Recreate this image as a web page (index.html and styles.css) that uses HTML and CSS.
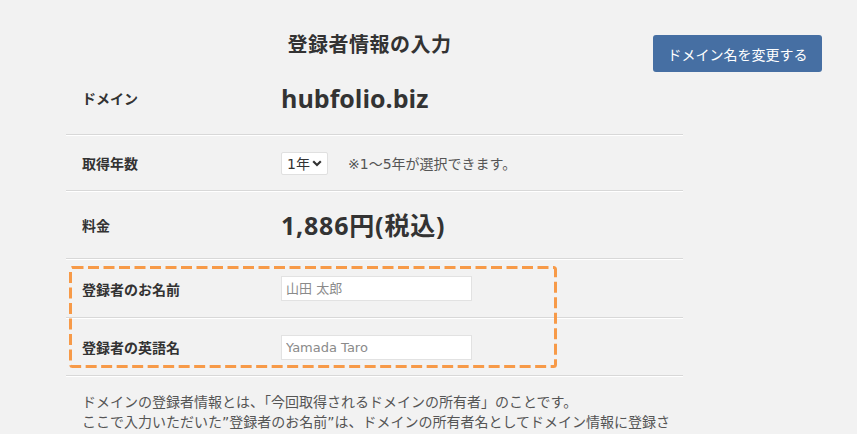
FILE: index.html
```html
<!DOCTYPE html>
<html lang="ja">
<head>
<meta charset="utf-8">
<title>登録者情報の入力</title>
<link rel="stylesheet" href="styles.css">
</head>
<body>
<div class="page">
  <header class="head">
    <h1 class="title">登録者情報の入力</h1>
    <button class="change-btn" type="button">ドメイン名を変更する</button>
  </header>
  <div class="form">
    <div class="row row-domain">
      <div class="label">ドメイン</div>
      <div class="value big">hubfolio.biz</div>
    </div>
    <div class="row row-years">
      <div class="label">取得年数</div>
      <div class="value">
        <div class="select">1年<svg class="chev" width="10" height="7" viewBox="0 0 10 7"><path d="M1.2 1.3 L5 5 L8.8 1.3" fill="none" stroke="#333" stroke-width="2.2"/></svg></div>
        <span class="note">※1〜5年が選択できます。</span>
      </div>
    </div>
    <div class="row row-price">
      <div class="label">料金</div>
      <div class="value big price">1,886円(税込)</div>
    </div>
    <div class="highlight">
      <div class="row row-name">
        <div class="label">登録者のお名前</div>
        <div class="value"><input class="field" type="text" placeholder="山田 太郎"></div>
      </div>
      <div class="row row-en">
        <div class="label">登録者の英語名</div>
        <div class="value"><input class="field" type="text" placeholder="Yamada Taro"></div>
      </div>
      <svg class="dash-frame" width="488" height="102" viewBox="0 0 488 102"><rect x="1.5" y="1.5" width="485" height="99" rx="2" fill="none" stroke="#f79a48" stroke-width="3" stroke-dasharray="11 4.5"/></svg>
    </div>
  </div>
  <p class="desc">ドメインの登録者情報とは、「今回取得されるドメインの所有者」のことです。<br>ここで入力いただいた”登録者のお名前”は、ドメインの所有者名としてドメイン情報に登録さ</p>
</div>
</body>
</html>
```
FILE: styles.css
```css
html, body {
  margin: 0;
  padding: 0;
  overflow: hidden;
}
body {
  background: #f2f2f2;
  color: #333;
  font-family: "DejaVu Sans", "Noto Sans CJK JP", sans-serif;
  font-size: 14px;
}
.page {
  margin-left: 66px;
  width: 756px;
}
.head {
  display: flex;
  align-items: flex-start;
  height: 72px;
}
.title {
  box-sizing: border-box;
  width: 587px;
  margin: 0;
  padding: 30px 0 0 20px;
  text-align: center;
  font-family: "Noto Sans CJK JP", sans-serif;
  font-size: 20px;
  letter-spacing: 0.5px;
  line-height: 28px;
  font-weight: 700;
  color: #333;
}
.change-btn {
  margin-top: 35px;
  width: 169px;
  height: 37px;
  border: none;
  border-radius: 3px;
  background: #466fa3;
  color: #fff;
  font-family: "Noto Sans CJK JP", sans-serif;
  font-size: 14px;
  padding: 0;
  cursor: pointer;
}
.form {
  width: 617px;
}
.row {
  display: flex;
  align-items: center;
  border-bottom: 1px solid #d8d8d8;
  box-shadow: 0 1px 0 #fff;
  margin-bottom: 1px;
}
.row-domain { height: 62px; padding-bottom: 10px; box-sizing: content-box; height: 52px; }
.row-years { height: 54px; }
.row-price { height: 66px; }
.row-name { height: 57px; }
.row-en { height: 56px; }
.label {
  box-sizing: border-box;
  width: 215px;
  padding-left: 16px;
  font-family: "Noto Sans CJK JP", sans-serif;
  font-weight: 700;
  font-size: 14px;
  color: #333;
}
.value {
  display: flex;
  align-items: center;
}
.big {
  font-family: "Open Sans", "Noto Sans CJK JP", sans-serif;
  font-weight: 700;
  font-size: 25px;
  color: #333;
  line-height: 32px;
}
.price {
  letter-spacing: 0.8px;
}
.select {
  box-sizing: border-box;
  width: 47px;
  height: 23px;
  display: flex;
  align-items: center;
  padding-left: 5px;
  background: #fff;
  border: 1px solid #e0e0e0;
  border-radius: 2px;
  font-size: 14px;
  color: #333;
}
.chev {
  margin-left: 2px;
}
.note {
  margin-left: 20px;
  font-size: 14px;
  color: #555;
}
.highlight {
  position: relative;
}
.dash-frame {
  position: absolute;
  left: 3px;
  top: 6px;
  pointer-events: none;
}
.field {
  box-sizing: border-box;
  width: 191px;
  height: 25px;
  margin: 0;
  padding: 0 4px;
  background: #fff;
  border: 1px solid #e2e2e2;
  border-radius: 0;
  font-family: "DejaVu Sans", "Noto Sans CJK JP", sans-serif;
  font-size: 13px;
  color: #333;
  outline: none;
}
.field::placeholder {
  color: #8a8a8a;
}
.desc {
  width: 600px;
  margin: 16px 0 0;
  padding-left: 16px;
  font-size: 14px;
  line-height: 20px;
  color: #555;
}
```
